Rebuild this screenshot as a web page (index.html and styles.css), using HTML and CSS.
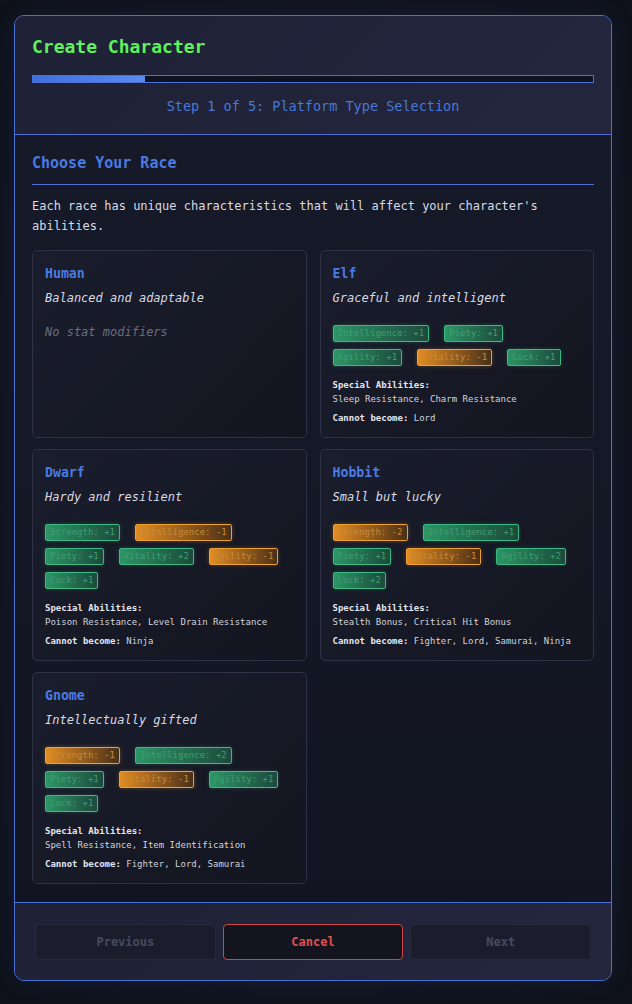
FILE: index.html
```html
<!DOCTYPE html>
<html lang="en">
<head>
<meta charset="utf-8">
<title>Create Character</title>
<link rel="stylesheet" href="styles.css">
</head>
<body>
<div class="wizard">
  <header class="wizard-header">
    <h1 class="wizard-title">Create Character</h1>
    <div class="progress"><div class="progress-fill" style="width:20%"></div></div>
    <div class="step-label">Step 1 of 5: Platform Type Selection</div>
  </header>

  <main class="wizard-body">
    <h2 class="section-title">Choose Your Race</h2>
    <p class="section-desc">Each race has unique characteristics that will affect your character's abilities.</p>

    <div class="race-grid">
      <div class="race-card">
        <h3 class="race-name">Human</h3>
        <p class="race-tagline">Balanced and adaptable</p>
        <p class="no-mods">No stat modifiers</p>
      </div>

      <div class="race-card">
        <h3 class="race-name">Elf</h3>
        <p class="race-tagline">Graceful and intelligent</p>
        <div class="stats">
          <span class="stat up">Intelligence: +1</span>
          <span class="stat up">Piety: +1</span>
          <span class="stat up">Agility: +1</span>
          <span class="stat down">Vitality: -1</span>
          <span class="stat up">Luck: +1</span>
        </div>
        <div class="abilities"><strong>Special Abilities:</strong><br>Sleep Resistance, Charm Resistance</div>
        <div class="restrict"><strong>Cannot become:</strong> Lord</div>
      </div>

      <div class="race-card">
        <h3 class="race-name">Dwarf</h3>
        <p class="race-tagline">Hardy and resilient</p>
        <div class="stats">
          <span class="stat up">Strength: +1</span>
          <span class="stat down">Intelligence: -1</span>
          <span class="stat up">Piety: +1</span>
          <span class="stat up">Vitality: +2</span>
          <span class="stat down">Agility: -1</span>
          <span class="stat up">Luck: +1</span>
        </div>
        <div class="abilities"><strong>Special Abilities:</strong><br>Poison Resistance, Level Drain Resistance</div>
        <div class="restrict"><strong>Cannot become:</strong> Ninja</div>
      </div>

      <div class="race-card">
        <h3 class="race-name">Hobbit</h3>
        <p class="race-tagline">Small but lucky</p>
        <div class="stats">
          <span class="stat down">Strength: -2</span>
          <span class="stat up">Intelligence: +1</span>
          <span class="stat up">Piety: +1</span>
          <span class="stat down">Vitality: -1</span>
          <span class="stat up">Agility: +2</span>
          <span class="stat up">Luck: +2</span>
        </div>
        <div class="abilities"><strong>Special Abilities:</strong><br>Stealth Bonus, Critical Hit Bonus</div>
        <div class="restrict"><strong>Cannot become:</strong> Fighter, Lord, Samurai, Ninja</div>
      </div>

      <div class="race-card">
        <h3 class="race-name">Gnome</h3>
        <p class="race-tagline">Intellectually gifted</p>
        <div class="stats">
          <span class="stat down">Strength: -1</span>
          <span class="stat up">Intelligence: +2</span>
          <span class="stat up">Piety: +1</span>
          <span class="stat down">Vitality: -1</span>
          <span class="stat up">Agility: +1</span>
          <span class="stat up">Luck: +1</span>
        </div>
        <div class="abilities"><strong>Special Abilities:</strong><br>Spell Resistance, Item Identification</div>
        <div class="restrict"><strong>Cannot become:</strong> Fighter, Lord, Samurai</div>
      </div>
    </div>
  </main>

  <footer class="wizard-footer">
    <button class="btn btn-muted" disabled>Previous</button>
    <button class="btn btn-cancel">Cancel</button>
    <button class="btn btn-muted" disabled>Next</button>
  </footer>
</div>
</body>
</html>
```

FILE: styles.css
```css
* { box-sizing: border-box; }

html, body {
  margin: 0;
  padding: 0;
}

body {
  background: radial-gradient(ellipse at center, #171a28 0%, #121520 60%, #0e1119 100%);
  min-height: 1004px;
  padding: 15px 14px 24px;
  font-family: "DejaVu Sans Mono", "Liberation Mono", monospace;
  color: #d4d6e0;
}

.wizard {
  width: 598px;
  border: 1px solid #4a6fd6;
  border-radius: 10px;
  overflow: hidden;
  box-shadow: 0 0 24px rgba(60, 100, 210, 0.12);
  background: #151827;
}

.wizard-header {
  background: linear-gradient(135deg, #1f2236 0%, #23263d 100%);
  padding: 20px 17px 18px;
  border-bottom: 1px solid #4a6fd6;
}

.wizard-title {
  margin: 0 0 17px;
  font-size: 18px;
  line-height: 22px;
  font-weight: bold;
  color: #5ef25c;
}

.progress {
  height: 8px;
  border: 1px solid #4a6fd6;
  background: #0f1220;
}

.progress-fill {
  height: 100%;
  background: linear-gradient(90deg, #3f6ee0, #5a8cf0);
}

.step-label {
  margin-top: 13px;
  text-align: center;
  font-size: 13.5px;
  line-height: 20px;
  color: #4a78d6;
}

.wizard-body {
  background: linear-gradient(180deg, #161928 0%, #121521 100%);
  padding: 19px 17px 18px;
}

.section-title {
  margin: 0;
  padding-bottom: 12px;
  border-bottom: 1px solid #4a6fd6;
  font-size: 15px;
  line-height: 18px;
  font-weight: bold;
  color: #4a7be2;
}

.section-desc {
  margin: 11px 0 14px;
  font-size: 12px;
  line-height: 20px;
  color: #d8dae4;
}

.race-grid {
  display: grid;
  grid-template-columns: 1fr 1fr;
  column-gap: 13px;
  row-gap: 11px;
}

.race-card {
  border: 1px solid #2e3244;
  border-radius: 5px;
  padding: 13px 12px 12px;
  background: linear-gradient(135deg, #1a1d2d 0%, #13151f 100%);
}

.race-name {
  margin: 0 0 5px;
  font-size: 13.2px;
  line-height: 20px;
  font-weight: bold;
  color: #4a7be6;
}

.race-tagline {
  margin: 0;
  font-size: 12px;
  line-height: 18px;
  font-style: italic;
  color: #d8dae6;
}

.no-mods {
  margin: 16px 0 0;
  font-size: 12px;
  line-height: 18px;
  font-style: italic;
  color: #6a6f80;
}

.stats {
  display: flex;
  flex-wrap: wrap;
  column-gap: 15px;
  row-gap: 7px;
  margin-top: 18px;
}

.stat {
  display: inline-block;
  padding: 2px 4px;
  font-size: 9px;
  line-height: 11px;
  border-radius: 2px;
  border: 1px solid;
}

.stat.up {
  border-color: #3dba82;
  color: #3f9f70;
  background: linear-gradient(90deg, #2d9566 0%, #1c4a3c 100%);
  box-shadow: 0 0 4px rgba(61, 186, 130, 0.25);
}

.stat.down {
  border-color: #eea032;
  color: #c88a38;
  background: linear-gradient(90deg, #e28c22 0%, #4a3018 100%);
  box-shadow: 0 0 4px rgba(238, 160, 50, 0.3);
}

.abilities {
  margin-top: 12px;
  font-size: 9px;
  line-height: 14px;
  color: #d2d4de;
}

.abilities strong,
.restrict strong {
  color: #e4e6ee;
  font-weight: bold;
}

.restrict {
  margin-top: 5px;
  font-size: 9px;
  line-height: 14px;
  color: #d2d4de;
}

.wizard-footer {
  display: flex;
  gap: 7px;
  padding: 21px 20px 20px;
  border-top: 1px solid #4a6fd6;
  background: linear-gradient(135deg, #1f2236 0%, #23263d 100%);
}

.btn {
  flex: 1;
  font-family: "DejaVu Sans Mono", "Liberation Mono", monospace;
  font-size: 12px;
  line-height: 16px;
  font-weight: bold;
  padding: 9px 0;
  border-radius: 4px;
  border: 1px solid #262a3b;
  text-align: center;
}

.btn-muted {
  background: #1b1d2d;
  color: #474b5e;
}

.btn-cancel {
  background: #13141e;
  border-color: #d04646;
  color: #e05252;
}
```
